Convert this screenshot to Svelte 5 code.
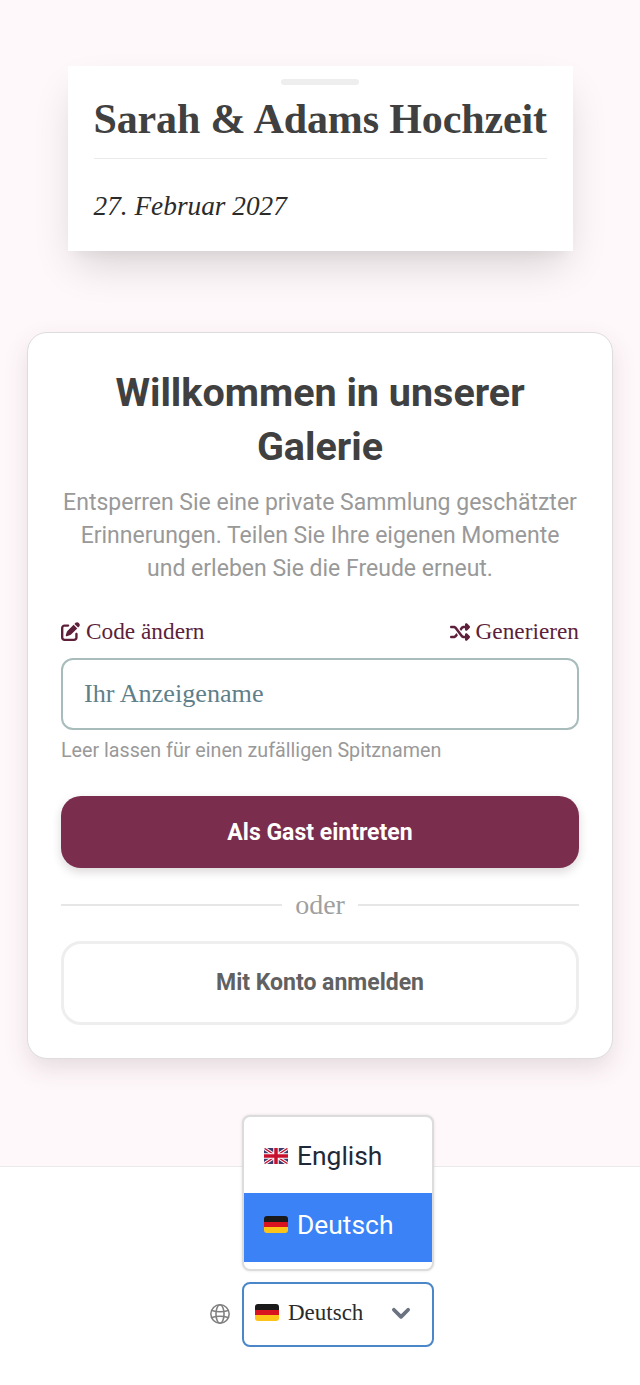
<script>
  let name = $state('');
  const languages = ['English', 'Deutsch'];
</script>

<main class="page">
  <section class="title-card">
    <div class="handle"></div>
    <h1>Sarah &amp; Adams Hochzeit</h1>
    <p class="date">27. Februar 2027</p>
  </section>

  <section class="welcome">
    <h2>Willkommen in unserer Galerie</h2>
    <p class="intro">Entsperren Sie eine private Sammlung geschätzter Erinnerungen. Teilen Sie Ihre eigenen Momente und erleben Sie die Freude erneut.</p>

    <div class="links">
      <a href="#code">
        <svg viewBox="0 0 512 512" width="19" height="19"><path fill="currentColor" d="M471.6 21.7c-21.9-21.9-57.3-21.9-79.2 0L362.3 51.7l97.9 97.9 30.1-30.1c21.9-21.9 21.9-57.3 0-79.2L471.6 21.7zm-299.2 220c-6.1 6.1-10.8 13.6-13.5 21.9l-29.6 88.8c-2.9 8.6-.6 18.1 5.8 24.6s15.9 8.7 24.6 5.8l88.8-29.6c8.2-2.7 15.7-7.4 21.9-13.5L437.7 172.3 339.7 74.3 172.4 241.7zM96 64C43 64 0 107 0 160V416c0 53 43 96 96 96H352c53 0 96-43 96-96V320c0-17.7-14.3-32-32-32s-32 14.3-32 32v96c0 17.7-14.3 32-32 32H96c-17.7 0-32-14.3-32-32V160c0-17.7 14.3-32 32-32h96c17.700 0 32-14.3 32-32s-14.3-32-32-32H96z"/></svg>
        Code ändern
      </a>
      <a href="#generate">
        <svg viewBox="0 0 512 512" width="20" height="20"><path fill="currentColor" d="M403.8 34.4c12-5 25.7-2.2 34.9 6.9l64 64c6 6 9.4 14.1 9.4 22.6s-3.4 16.6-9.4 22.6l-64 64c-9.2 9.2-22.9 11.9-34.9 6.9s-19.8-16.6-19.8-29.6V160H352c-10.1 0-19.6 4.7-25.6 12.8L284 229.3 244 176l31.2-41.6C293.3 110.2 321.8 96 352 96h32V64c0-12.9 7.8-24.6 19.8-29.6zM164 282.7L204 336l-31.2 41.6C154.7 401.8 126.2 416 96 416H32c-17.7 0-32-14.3-32-32s14.3-32 32-32H96c10.1 0 19.6-4.7 25.6-12.8L164 282.7zm274.6 188c-9.2 9.2-22.9 11.9-34.9 6.9s-19.8-16.6-19.8-29.6V416H352c-30.2 0-58.7-14.2-76.8-38.4L121.6 172.8c-6-8.1-15.5-12.8-25.6-12.8H32c-17.7 0-32-14.3-32-32s14.3-32 32-32H96c30.2 0 58.7 14.2 76.8 38.4L326.4 339.2c6 8.1 15.5 12.8 25.6 12.8h32V320c0-12.9 7.8-24.6 19.8-29.6s25.7-2.2 34.9 6.9l64 64c6 6 9.4 14.1 9.4 22.6s-3.4 16.6-9.4 22.6l-64 64z"/></svg>
        Generieren
      </a>
    </div>

    <input class="name" type="text" placeholder="Ihr Anzeigename" bind:value={name} />
    <small class="hint">Leer lassen für einen zufälligen Spitznamen</small>

    <button class="primary">Als Gast eintreten</button>
    <div class="divider"><span>oder</span></div>
    <button class="secondary">Mit Konto anmelden</button>
  </section>
</main>

<footer class="footer">
  <div class="lang">
    <svg class="globe" viewBox="0 0 24 24" width="22" height="22" fill="none" stroke="currentColor" stroke-width="1.7">
      <circle cx="12" cy="12" r="10" />
      <ellipse cx="12" cy="12" rx="4.4" ry="10" />
      <path d="M3 8.2c5 1.6 13 1.6 18 0M3 15.8c5-1.6 13-1.6 18 0" />
    </svg>
    <div class="select-wrap">
      <ul class="menu">
        {#each languages as lang}
          <li class:active={lang === 'Deutsch'}>
            {#if lang === 'English'}
              <svg class="flag" viewBox="0 0 24 16" width="24" height="16">
                <rect width="24" height="16" fill="#3c3b6e" />
                <path d="M0 0L24 16M24 0L0 16" stroke="#fff" stroke-width="3.4" />
                <path d="M0 0L24 16M24 0L0 16" stroke="#c8102e" stroke-width="1.4" />
                <path d="M12 0V16M0 8H24" stroke="#fff" stroke-width="5.5" />
                <path d="M12 0V16M0 8H24" stroke="#c8102e" stroke-width="3.5" />
              </svg>
            {:else}
              {@render deFlag()}
            {/if}
            {lang}
          </li>
        {/each}
      </ul>
      <div class="select">
        {@render deFlag()}
        <span>Deutsch</span>
        <svg class="chevron" viewBox="0 0 20 20" width="22" height="22" fill="none" stroke="currentColor" stroke-width="3.4" stroke-linecap="round" stroke-linejoin="round"><path d="M3.5 7l6.5 6.5L16.500 7" /></svg>
      </div>
    </div>
  </div>
</footer>

{#snippet deFlag()}
  <span class="de-flag"><i></i><i></i><i></i></span>
{/snippet}

<style>
  :global(body) {
    background: #fff;
    font-family: Roboto, sans-serif;
  }
  .page {
    background: #fff8fa;
    padding: 66px 27px 0;
    display: flex;
    flex-direction: column;
    align-items: center;
    height: 1166px;
    box-sizing: border-box;
  }
  .title-card {
    box-sizing: border-box;
    width: 505px;
    height: 185px;
    background: #fff;
    padding: 0 26px;
    position: relative;
    box-shadow: 0 20px 40px -8px rgba(0, 0, 0, 0.16), 0 8px 12px -6px rgba(0, 0, 0, 0.05);
  }
  .handle {
    position: absolute;
    top: 13px;
    left: 213px;
    width: 78px;
    height: 6px;
    border-radius: 3px;
    background: #eee;
  }
  h1 {
    margin: 0;
    padding: 26px 0 12px;
    font: 700 42px/54px "Liberation Serif", serif;
    letter-spacing: -0.13px;
    color: #404040;
    border-bottom: 1px solid #eaeaea;
    white-space: nowrap;
  }
  .date {
    margin: 29px 0 0;
    font: italic 400 27.3px/36px "Liberation Serif", serif;
    color: #2b2b2b;
  }
  .welcome {
    box-sizing: border-box;
    margin-top: 81px;
    width: 586px;
    height: 727px;
    background: #fff;
    border: 1px solid #ddd;
    border-radius: 20px;
    padding: 33px 33px 0;
    box-shadow: 0 10px 25px rgba(60, 40, 45, 0.13);
  }
  h2 {
    margin: 0;
    font: 700 39.5px/54px Roboto, sans-serif;
    color: #404040;
    text-align: center;
  }
  .intro {
    margin: 12px 0 0;
    font: 400 23px/33px Roboto, sans-serif;
    color: #999;
    text-align: center;
  }
  .links {
    margin-top: 30px;
    display: flex;
    justify-content: space-between;
    align-items: center;
    height: 33px;
  }
  .links a {
    display: flex;
    align-items: center;
    gap: 6px;
    font: 400 23.3px/33px "Liberation Serif", serif;
    color: #5e1f3a;
    text-decoration: none;
  }
  .name {
    display: block;
    box-sizing: border-box;
    width: 100%;
    height: 72px;
    margin-top: 10px;
    padding: 0 21px;
    border: 2px solid #a9bcbc;
    border-radius: 12px;
    background: #fff;
    font: 400 26.2px "Liberation Serif", serif;
    color: #404040;
    outline: none;
  }
  .name::placeholder {
    color: #5f7f8a;
    opacity: 1;
  }
  .hint {
    display: block;
    margin-top: 7px;
    font: 400 19.7px/27px Roboto, sans-serif;
    color: #999;
  }
  button {
    display: block;
    box-sizing: border-box;
    width: 100%;
    font-family: Roboto, sans-serif;
    font-weight: 700;
    cursor: pointer;
  }
  .primary {
    margin-top: 32px;
    height: 72px;
    border: none;
    border-radius: 20px;
    background: #7b2d4d;
    color: #fff;
    font-size: 23px;
    box-shadow: 0 4px 10px rgba(60, 40, 45, 0.18);
  }
  .divider {
    margin-top: 20px;
    height: 33px;
    display: flex;
    align-items: center;
    gap: 13px;
    font: 400 28px/33px "Liberation Serif", serif;
    color: #a0a0a0;
  }
  .divider::before,
  .divider::after {
    content: '';
    flex: 1;
    height: 2px;
    background: #e6e6e6;
  }
  .secondary {
    margin-top: 20px;
    height: 84px;
    padding-bottom: 2px;
    border: 3px solid #eee;
    border-radius: 20px;
    background: #fff;
    color: #616161;
    font-size: 23px;
  }
  .footer {
    height: 219px;
    box-sizing: border-box;
    background: #fff;
    border-top: 1px solid #eaeaea;
    padding-top: 115px;
    display: flex;
    justify-content: center;
  }
  .lang {
    display: flex;
    align-items: center;
    gap: 11px;
    height: 65px;
    margin-left: 3px;
    margin-top: -1px;
    color: #808080;
  }
  .select-wrap {
    position: relative;
    width: 192px;
    margin-top: 1px;
  }
  .select {
    box-sizing: border-box;
    height: 65px;
    display: flex;
    align-items: center;
    gap: 9px;
    padding: 0 20px 3px 11px;
    border: 2px solid #4a86c8;
    border-radius: 8px;
    background: #fff;
    font: 400 23px "Liberation Serif", serif;
    color: #2b2b2b;
  }
  .select span:not(.de-flag) {
    flex: 1;
  }
  .chevron {
    color: #6b7280;
  }
  .menu {
    position: absolute;
    left: 0;
    right: 0;
    bottom: 76px;
    margin: 0;
    padding: 1px 0 0;
    box-sizing: border-box;
    list-style: none;
    height: 156px;
    background: #fff;
    border: 2px solid #dcdcdc;
    border-radius: 8px;
    box-shadow: 0 0 3px rgba(0, 0, 0, 0.12);
    font: 400 26.4px/40px Roboto, sans-serif;
    color: #1f2937;
  }
  .menu li {
    box-sizing: border-box;
    height: 69px;
    display: flex;
    align-items: center;
    gap: 9px;
    padding: 0 0 5px 20px;
    margin-top: 6px;
  }
  .menu li.active {
    margin-top: 0;
    background: #3b82f6;
    color: #fff;
  }
  .flag {
    flex: none;
    border-radius: 2px;
  }
  .de-flag {
    flex: none;
    width: 24px;
    height: 17px;
    border-radius: 3px;
    overflow: hidden;
    display: flex;
    flex-direction: column;
  }
  .de-flag i {
    flex: 1;
    background: #1a1a1a;
  }
  .de-flag i:nth-child(2) {
    background: #d8121f;
  }
  .de-flag i:nth-child(3) {
    background: #fcc419;
  }
</style>
